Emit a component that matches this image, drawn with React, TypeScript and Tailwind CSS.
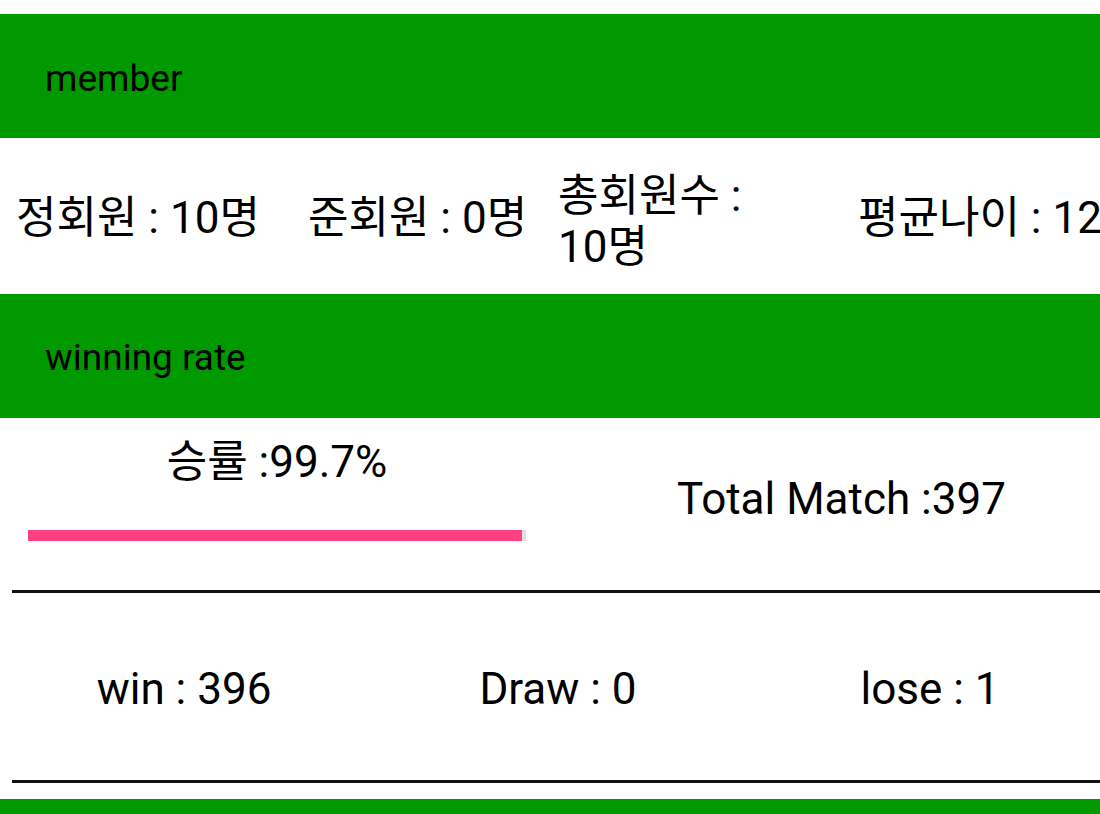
import React from "react";

const font = { fontFamily: 'Roboto, "Noto Sans CJK KR", sans-serif' };

export default function App() {
  return (
    <div className="w-[1100px] h-[814px] overflow-hidden bg-white text-black" style={font}>
      <div className="h-[14px]" />
      <div className="h-[124px] bg-[#009900] flex items-center pl-[45px] pt-[5px] text-[37px]">member</div>
      <div className="h-[156px] flex items-center text-[44px] leading-[50px] whitespace-nowrap pt-[3px]">
        <div className="w-[291px] shrink-0 pl-[16px]">정회원 : 10명</div>
        <div className="w-[250px] shrink-0 pl-[17px]">준회원 : 0명</div>
        <div className="w-[300px] shrink-0 pl-[17px] whitespace-normal">
          <div className="w-[200px] leading-[51px] mt-[8px]">총회원수 : 10명</div>
        </div>
        <div className="shrink-0 pl-[17px]">평균나이 : 12</div>
      </div>
      <div className="h-[124px] bg-[#009900] flex items-center pl-[45px] pt-[4px] text-[37px]">winning rate</div>
      <div className="h-[172px] flex text-[44px] leading-[50px]">
        <div className="w-[550px] shrink-0 flex flex-col">
          <div className="pt-[19px] text-center w-[554px] whitespace-nowrap">승률 :99.7%</div>
          <div className="ml-[28px] mt-[43px] w-[498px] h-[11px] bg-[#e0e0e0]">
            <div className="h-full bg-[#ff4081]" style={{ width: "99.2%" }} />
          </div>
        </div>
        <div className="pt-[56px] pl-[127px] whitespace-nowrap">Total Match :397</div>
      </div>
      <div className="ml-[12px] h-[3px] bg-[#111]" />
      <div className="h-[187px] flex items-center text-[44px] leading-[50px] whitespace-nowrap pt-[5px]">
        <div className="w-[368px] shrink-0 text-center">win : 396</div>
        <div className="w-[380px] shrink-0 text-center">Draw : 0</div>
        <div className="w-[364px] shrink-0 text-center">lose : 1</div>
      </div>
      <div className="ml-[12px] h-[3px] bg-[#111]" />
      <div className="h-[16px]" />
      <div className="h-[40px] bg-[#009900]" />
    </div>
  );
}
